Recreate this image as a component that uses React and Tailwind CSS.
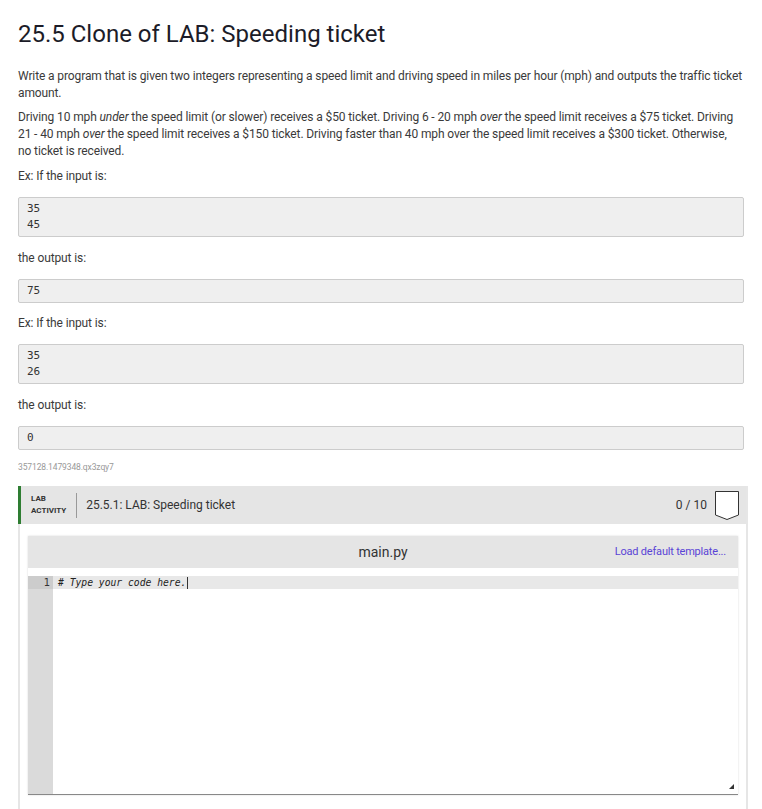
import React from 'react';

const mono = "font-['DejaVu_Sans_Mono',monospace]";

function Pre({ lines }) {
  return (
    <pre className={`mt-[12px] bg-[#efefef] border border-[#cccccc] rounded-[2px] px-[8px] py-[3px] text-[11px] leading-[16px] text-[#333] ${mono}`}>
      {lines.join('\n')}
    </pre>
  );
}

function Badge() {
  return (
    <svg width="26" height="31" viewBox="0 0 26 31" className="shrink-0">
      <path d="M1.5 1.5 H24.5 V25 L13 29.5 L1.5 25 Z" fill="#fff" stroke="#333" strokeWidth="1" />
    </svg>
  );
}

export default function App() {
  return (
    <div className="min-h-screen bg-white font-['Roboto',sans-serif] text-[#333] px-[18px] pt-[19px] overflow-hidden">
      <h1 className="text-[24px] leading-[30px] text-[#1c1c28] font-normal">25.5 Clone of LAB: Speeding ticket</h1>

      <div className="text-[12px] leading-[17px] text-[#3a3a3a] tracking-[-0.115px]">
        <p className="mt-[19px] whitespace-nowrap">
          Write a program that is given two integers representing a speed limit and driving speed in miles per hour (mph) and outputs the traffic ticket<br />
          amount.
        </p>
        <p className="mt-[7px] whitespace-nowrap">
          Driving 10 mph <em>under</em> the speed limit (or slower) receives a $50 ticket. Driving 6 - 20 mph <em>over</em> the speed limit receives a $75 ticket. Driving<br />
          21 - 40 mph <em>over</em> the speed limit receives a $150 ticket. Driving faster than 40 mph over the speed limit receives a $300 ticket. Otherwise,<br />
          no ticket is received.
        </p>
        <p className="mt-[8px]">Ex: If the input is:</p>
        <Pre lines={['35', '45']} />
        <p className="mt-[13px]">the output is:</p>
        <Pre lines={['75']} />
        <p className="mt-[12px]">Ex: If the input is:</p>
        <Pre lines={['35', '26']} />
        <p className="mt-[13px]">the output is:</p>
        <Pre lines={['0']} />
        <div className="mt-[11px] text-[8.5px] leading-[12px] text-[#999]">357128.1479348.qx3zqy7</div>
      </div>

      {/* lab activity */}
      <div className="mt-[13px] w-[730px] border-x-2 border-[#e6e6e6] h-[340px]">
        <div className="h-[38px] bg-[#e5e5e5] border-l-[3px] border-[#2e7d32] -ml-[2px] flex items-center pl-[10px] pr-[6px]">
          <div className="text-[8px] leading-[12px] font-bold text-[#333] uppercase">
            <div>Lab</div>
            <div>Activity</div>
          </div>
          <div className="w-px h-[25px] bg-[#999] ml-[10px] mr-[9px]" />
          <div className="text-[12px] text-[#333]">25.5.1: LAB: Speeding ticket</div>
          <div className="ml-auto text-[12px] text-[#333] mr-[7px]">0 / 10</div>
          <Badge />
        </div>

        <div className="px-[8px] pt-[12px]">
          <div className="shadow-[0_0_2px_rgba(0,0,0,0.15)]">
            <div className="h-[32px] bg-[#e5e5e5] relative flex items-center justify-center">
              <span className="text-[14px] text-[#333]">main.py</span>
              <span className="absolute right-[12px] text-[11px] tracking-[-0.2px] text-[#5a44d6]">Load default template...</span>
            </div>
            <div className="h-[8px] bg-white" />
            <div className="flex h-[219px] border-b border-[#888] relative">
              <div className="w-[25px] bg-[#dadada] shrink-0">
                <div className="h-[13px] bg-[#cccccc] text-right pr-[3px] text-[10px] leading-[13px] text-[#333] font-['DejaVu_Sans',sans-serif]">1</div>
              </div>
              <div className="flex-1 bg-white">
                <div className={`h-[13px] bg-[#e8e8e8] pl-[5px] text-[9.7px] leading-[13px] italic text-[#222] ${mono} flex items-center`}>
                  <span># Type your code here.</span>
                  <span className="inline-block w-px h-[12px] bg-[#333] ml-[1px]" />
                </div>
              </div>
              <svg width="7" height="7" viewBox="0 0 7 7" className="absolute right-[3px] bottom-[4px]">
                <path d="M6 1 L6 6 L1 6 Z" fill="#333" />
              </svg>
            </div>
          </div>
        </div>
      </div>
    </div>
  );
}
